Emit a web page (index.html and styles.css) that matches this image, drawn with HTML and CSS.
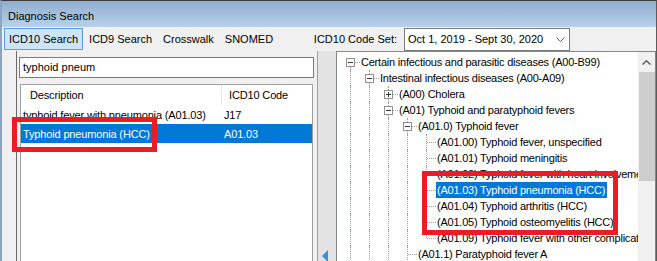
FILE: index.html
```html
<!DOCTYPE html>
<html>
<head>
<meta charset="utf-8">
<title>Diagnosis Search</title>
<link rel="stylesheet" href="styles.css">
</head>
<body>

<div class="window">
  <div class="titlebar">Diagnosis Search</div>

  <div class="toolbar">
    <span class="tool active">ICD10 Search</span>
    <span class="tool">ICD9 Search</span>
    <span class="tool">Crosswalk</span>
    <span class="tool">SNOMED</span>
    <span class="codeset-label">ICD10 Code Set:</span>
    <div class="combo">
      <span>Oct 1, 2019 - Sept 30, 2020</span>
      <svg width="9" height="5" viewBox="0 0 9 5"><polyline points="0.5,0.5 4.5,4.5 8.5,0.5" fill="none" stroke="#606060" stroke-width="1"/></svg>
    </div>
  </div>

  <div class="content">
    <div class="left">
      <div class="panel">
        <div class="search">typhoid pneum</div>
        <div class="list">
          <div class="lrow head"><span class="c1">Description</span><span class="c2">ICD10 Code</span></div>
          <div class="lrow"><span class="c1">typhoid fever with pneumonia (A01.03)</span><span class="c2">J17</span></div>
          <div class="lrow sel"><span class="c1">Typhoid pneumonia (HCC)</span><span class="c2">A01.03</span></div>
        </div>
      </div>
    </div>

    <div class="splitter"><span class="collapse"></span></div>

    <div class="tree">
      <div class="nodes">
        <div class="node"><span class="g first"><i class="box"></i></span><span class="lbl">Certain infectious and parasitic diseases (A00-B99)</span></div>
        <div class="node"><span class="g v"></span><span class="g mid"><i class="box"></i></span><span class="lbl">Intestinal infectious diseases (A00-A09)</span></div>
        <div class="node"><span class="g v"></span><span class="g v"></span><span class="g mid"><i class="box plus"></i></span><span class="lbl">(A00) Cholera</span></div>
        <div class="node"><span class="g v"></span><span class="g v"></span><span class="g mid"><i class="box"></i></span><span class="lbl">(A01) Typhoid and paratyphoid fevers</span></div>
        <div class="node"><span class="g v"></span><span class="g v"></span><span class="g v"></span><span class="g mid"><i class="box"></i></span><span class="lbl">(A01.0) Typhoid fever</span></div>
        <div class="node"><span class="g v"></span><span class="g v"></span><span class="g v"></span><span class="g v"></span><span class="g mid"></span><span class="lbl">(A01.00) Typhoid fever, unspecified</span></div>
        <div class="node"><span class="g v"></span><span class="g v"></span><span class="g v"></span><span class="g v"></span><span class="g mid"></span><span class="lbl">(A01.01) Typhoid meningitis</span></div>
        <div class="node"><span class="g v"></span><span class="g v"></span><span class="g v"></span><span class="g v"></span><span class="g mid"></span><span class="lbl">(A01.02) Typhoid fever with heart involvement</span></div>
        <div class="node"><span class="g v"></span><span class="g v"></span><span class="g v"></span><span class="g v"></span><span class="g mid"></span><span class="lbl sel">(A01.03) Typhoid pneumonia (HCC)</span></div>
        <div class="node"><span class="g v"></span><span class="g v"></span><span class="g v"></span><span class="g v"></span><span class="g mid"></span><span class="lbl">(A01.04) Typhoid arthritis (HCC)</span></div>
        <div class="node"><span class="g v"></span><span class="g v"></span><span class="g v"></span><span class="g v"></span><span class="g mid"></span><span class="lbl">(A01.05) Typhoid osteomyelitis (HCC)</span></div>
        <div class="node"><span class="g v"></span><span class="g v"></span><span class="g v"></span><span class="g v"></span><span class="g last"></span><span class="lbl">(A01.09) Typhoid fever with other complications</span></div>
        <div class="node"><span class="g v"></span><span class="g v"></span><span class="g v"></span><span class="g mid"></span><span class="lbl">(A01.1) Paratyphoid fever A</span></div>
      </div>
      <div class="vscroll">
        <div class="sb-up"><svg width="9" height="5" viewBox="0 0 9 5"><polyline points="0.5,4.5 4.5,0.8 8.5,4.5" fill="none" stroke="#606060" stroke-width="1.5"/></svg></div>
        <div class="sb-thumb"></div>
      </div>
    </div>
  </div>
</div>

<!-- red highlight boxes drawn over the screenshot -->
<div class="mark mark-list"></div>
<div class="mark mark-tree"></div>

</body>
</html>
```

FILE: styles.css
```css
* {box-sizing: border-box;}

body {
  margin: 0;
  width: 657px;
  height: 261px;
  overflow: hidden;
  position: relative;
  background: #f0f0f0;
  font-family: "Liberation Sans", Arial, sans-serif;
  font-size: 11px;
  color: #000;
}

/* Window frame */
.window {
  height: 300px;
  border-top: 1px solid #3c3c3c;
  border-left: 2px solid #8aa6c4;
  border-right: 1px solid #5a5a5a;
  display: flex;
  flex-direction: column;
}

.titlebar {
  flex: none;
  height: 26px;
  padding: 3px 0 0 6px;
  display: flex;
  align-items: center;
  background: linear-gradient(#8dadd0, #b9d1ea);
}

/* Tool strip */
.toolbar {
  flex: none;
  height: 24px;
  padding-left: 2px;
  display: flex;
  align-items: center;
  gap: 1px;
}

.tool {
  height: 22px;
  padding: 0 4px;
  border: 1px solid transparent;
  display: flex;
  align-items: center;
}

.tool.active {
  background: #cce4f7;
  border-color: #5a9ee0;
}

.codeset-label {
  margin-left: auto;
  margin-right: 6px;
}

.combo {
  width: 166px;
  height: 23px;
  margin-right: 86px;
  padding: 0 4px 0 3px;
  border: 1px solid #7a7a7a;
  background: #fff;
  display: flex;
  align-items: center;
}

.combo svg {margin-left: auto;}

/* Main area */
.content {
  flex: 1;
  display: flex;
  min-height: 0;
}

.left {
  flex: none;
  padding-left: 14px;
}

.panel {
  width: 302px;
  height: 100%;
  padding: 6px 3px 0 2px;
  border-left: 1px solid #696969;
  border-right: 1px solid #a0a0a0;
}

.search {
  height: 21px;
  padding-left: 3px;
  line-height: 19px;
  border: 1px solid #7a7a7a;
  background: #fff;
}

.list {
  width: 293px;
  height: 200px;
  margin: 6px 0 0 1px;
  border: 1px solid #a0a0a0;
  background: #fff;
  letter-spacing: -0.15px;
}

.lrow {
  display: flex;
  height: 19px;
  align-items: center;
  white-space: nowrap;
}

.lrow .c1 {width: 200px; padding-left: 2px;}
.lrow .c2 {padding-left: 3px;}

.lrow.head {height: 20px;}
.lrow.head .c1 {padding-left: 9px;}
.lrow.head .c2 {
  height: 20px;
  line-height: 20px;
  padding-left: 7px;
  border-left: 1px solid #e5e5e5;
}

.lrow.sel {
  background: #0078d7;
  color: #fff;
}

.splitter {
  flex: none;
  width: 18px;
  background: #e3e3e3;
  padding: 199px 0 0 4px;
}

.collapse {
  display: block;
  width: 0;
  height: 0;
  border-top: 6px solid transparent;
  border-bottom: 6px solid transparent;
  border-right: 6px solid #3b8de0;
}

/* Tree view */
.tree {
  flex: none;
  width: 320px;
  display: flex;
  border: 1px solid #828790;
  background: #fff;
}

.nodes {
  flex: 1;
  min-width: 0;
  overflow: hidden;
  padding: 2px 0 0 4px;
  white-space: nowrap;
  letter-spacing: -0.22px;
}

.node {
  display: flex;
  height: 16px;
}

.g {
  flex: none;
  width: 19px;
  height: 16px;
  position: relative;
}

.g.v::before, .g.mid::before, .g.last::before, .g.first::before {
  content: "";
  position: absolute;
  left: 9px;
  top: 0;
  height: 16px;
  border-left: 1px dotted #a0a0a0;
}

.g.last::before {height: 8px;}
.g.first::before {top: 8px; height: 8px;}

.g.mid::after, .g.last::after, .g.first::after {
  content: "";
  position: absolute;
  left: 10px;
  right: 0;
  top: 8px;
  border-top: 1px dotted #a0a0a0;
}

.box {
  position: absolute;
  left: 5px;
  top: 4px;
  width: 9px;
  height: 9px;
  z-index: 1;
  border: 1px solid #919191;
  background: #fff;
}

.box::before {
  content: "";
  position: absolute;
  left: 1px;
  top: 3px;
  width: 5px;
  height: 1px;
  background: #333;
}

.box.plus::after {
  content: "";
  position: absolute;
  left: 3px;
  top: 1px;
  width: 1px;
  height: 5px;
  background: #333;
}

.lbl {
  height: 16px;
  line-height: 16px;
  padding: 0 2px 0 1px;
}

.lbl.sel {
  background: #0078d7;
  color: #fff;
}

.vscroll {
  flex: none;
  width: 17px;
  background: #f0f0f0;
}

.sb-up {
  height: 20px;
  display: flex;
  align-items: center;
  justify-content: center;
}

.sb-thumb {
  height: 109px;
  margin-left: 1px;
  background: #cdcdcd;
}

/* Red annotation boxes */
.mark {
  position: absolute;
  border: 5px solid #ed1c24;
}

.mark-list {
  left: 12px;
  top: 117px;
  width: 145px;
  height: 35px;
}

.mark-tree {
  left: 422px;
  top: 171px;
  width: 196px;
  height: 64px;
}
```
